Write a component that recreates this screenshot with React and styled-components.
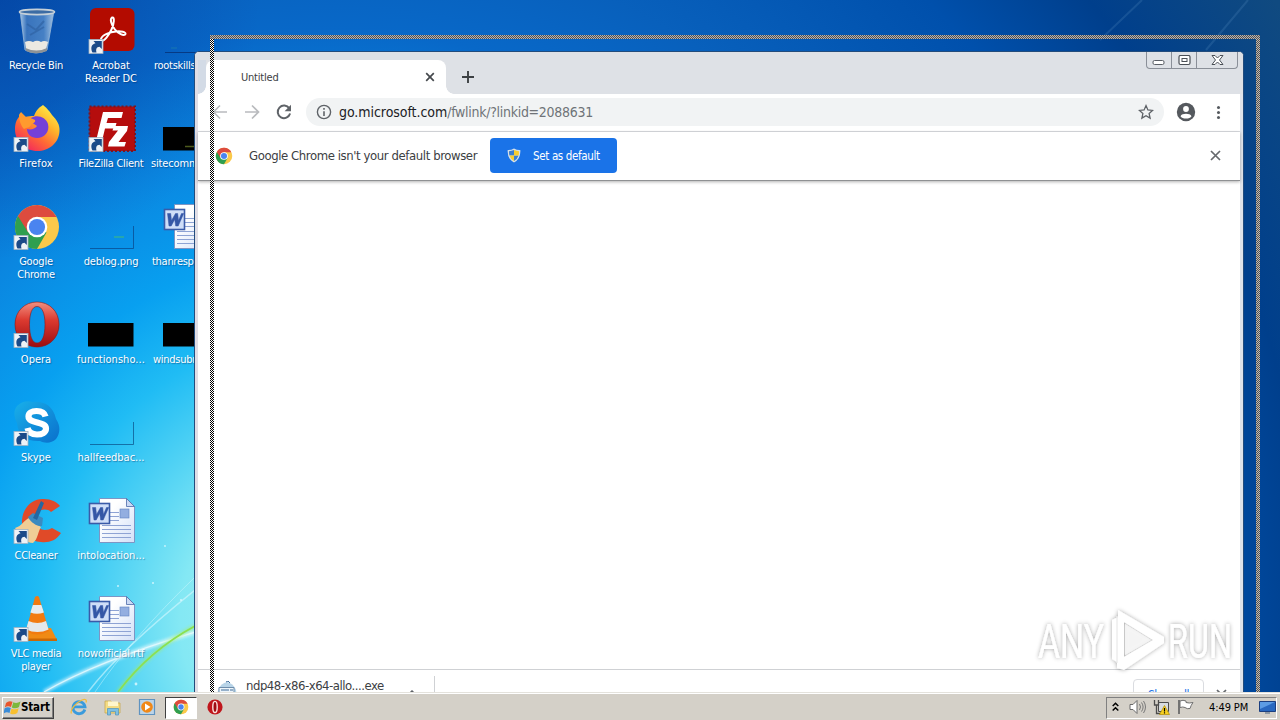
import React from "react"
import styled, {createGlobalStyle, css} from "styled-components"

const colors = {
	face: "#d4d0c8",
	frame: "#dee1e6",
	text: "#3c4043",
	grey: "#5f6368",
	blue: "#1a73e8",
}

/* ---------- icons ---------- */

const Shortcut = () => (
	<g>
		<rect x="1" y="33.500" width="14" height="14" fill="#eef2f6" stroke="#9fb2c4" strokeWidth=".8"/>
		<path d="M4.500 46.500C2.200 42 3.500 38 7.500 37.200L5.500 35h8.300v8l-2.300-2.200C8.500 41 7.500 43.500 8.500 46.500z" fill="#1b4a88"/>
	</g>
)

const RecycleIcon = () => (
	<svg width="48" height="48" viewBox="0 0 48 48">
		<defs>
			<linearGradient id="bin" x1="0" x2="1">
				<stop offset="0" stopColor="#b8d4ee"/>
				<stop offset=".2" stopColor="#3f78be"/>
				<stop offset=".7" stopColor="#4d86c8"/>
				<stop offset="1" stopColor="#b4cfe8"/>
			</linearGradient>
		</defs>
		<path d="M7 5l5 39q11 6 22 0l7-39z" fill="url(#bin)" stroke="#a9c4dc" strokeWidth=".8" opacity=".9"/>
		<path d="M12 36l1 7q10 5 20 0l2-7q-4-2-7 0-4-2.500-8 0-4-2-8 0z" fill="#ece9e2"/>
		<path d="M12.500 42q11 5 21.500 0v3q-11 4.500-21 0z" fill="#8d9296"/>
		<path d="M14 18l9 6 8-9M17 29l14-8" stroke="#2d5f9e" strokeWidth="2" fill="none" opacity=".6"/>
		<ellipse cx="24" cy="6" rx="17.500" ry="2.600" fill="#3c6ca4" stroke="#c6d0d8" strokeWidth="1.600"/>
	</svg>
)

const AcrobatIcon = () => (
	<svg width="48" height="48" viewBox="0 0 48 48">
		<rect x="2" y="2" width="44.500" height="43" rx="6" fill="#b30b00"/>
		<path d="M13 33c1-4 9-7 15-7.500 5-.6 10 .5 9.500 2.500-1 3-8-1-11-5-3-4-5-10-2.500-11.500 3-1 2 7-.5 12C21 29 16 36 13.500 34.500q-.7-.6-.5-1.500z" fill="none" stroke="#fff" strokeWidth="2"/>
		<Shortcut/>
	</svg>
)

const FirefoxIcon = () => (
	<svg width="48" height="48" viewBox="0 0 48 48">
		<defs>
			<linearGradient id="ffx" x1=".85" y1=".05" x2=".2" y2=".95">
				<stop offset="0" stopColor="#fff04a"/>
				<stop offset=".35" stopColor="#ffb32a"/>
				<stop offset=".65" stopColor="#ff6a35"/>
				<stop offset="1" stopColor="#f2255f"/>
			</linearGradient>
		</defs>
		<path d="M30 1c5 4 7 7 9 10 5 5 8 10 7.500 16C46 39 36 47 24.500 47 12 47 2 38 2 25c0-6 2-10 4-12l1-4 5 4c3-1 6-1 9-1 2-5 4-8 9-11z" fill="url(#ffx)"/>
		<path d="M18 14c6-4 15-1 17 6 2 8-4 14-11 14-6 0-10-4-10-9 4 1 8 0 10-3l-6-4z" fill="#7440d8"/>
		<path d="M6 11l2-3 5 5c4 0 6 2 9 3 1 3-3 3-4 5-1 3-4 2-7 4-3-3-5-9-5-14z" fill="#ff9a2e"/>
		<Shortcut/>
	</svg>
)

const FileZillaIcon = () => (
	<svg width="48" height="48" viewBox="0 0 48 48">
		<rect x="1.500" y="2.500" width="45.500" height="44.500" fill="#b50d0d" stroke="#7d1420" strokeWidth="2" strokeDasharray="2 2"/>
		<path d="M15 8h20l-1.500 6H20l-1.500 5h10l-1.500 5.500h-10L14 37H8z" fill="#fff"/>
		<path d="M26 22h14l-1 5-8.500 11H38l-1.500 4.500H20l1-4.500L30 26.500h-5.500z" fill="#fff"/>
		<Shortcut/>
	</svg>
)

const ChromeMark = ({size}) => (
	<svg width={size} height={size} viewBox="0 0 48 48">
		<circle cx="24" cy="24" r="22" fill="#fbc94a"/>
		<path d="M24 24L4.950 13A22 22 0 0 0 24 46l9.500-16.500z" fill="#2f9f50"/>
		<path d="M24 14h19.600A22 22 0 0 0 4.950 13l9.900 16z" fill="#dd4b3e"/>
		<circle cx="24" cy="24" r="10.300" fill="#fff"/>
		<circle cx="24" cy="24" r="8.100" fill="#4a84f0"/>
	</svg>
)

const ChromeIcon = () => (
	<svg width="48" height="48" viewBox="0 0 48 48">
		<g transform="translate(0 1)"><ChromeMark size={48}/></g>
		<Shortcut/>
	</svg>
)

const OperaMark = ({size, badge}) => (
	<svg width={size} height={size} viewBox="0 0 48 48">
		<defs>
			<linearGradient id="opr" x1="0" x2="0" y1="0" y2="1">
				<stop offset="0" stopColor="#f29080"/>
				<stop offset=".4" stopColor="#dc3a30"/>
				<stop offset="1" stopColor="#9c0c10"/>
			</linearGradient>
		</defs>
		<path fillRule="evenodd" d="M24 2C36 2 46 11 46 24.500S36 47 24 47 2 38 2 24.500 12 2 24 2zm0 4.500c-5 0-7.500 7-7.500 18S19 43 24 43s8-7 8-18.500-3-18-8-18z" fill="url(#opr)" stroke="#8e1414" strokeWidth=".6"/>
		{badge && <Shortcut/>}
	</svg>
)

const SkypeIcon = () => (
	<svg width="48" height="48" viewBox="0 0 48 48">
		<defs>
			<linearGradient id="sky" x1="0" x2="1" y1="0" y2="1">
				<stop offset="0" stopColor="#18b0ea"/>
				<stop offset="1" stopColor="#0a70cc"/>
			</linearGradient>
		</defs>
		<path d="M4 8C10 2 16 3 20 4c10-1 20 3 23 17 5 7 4 15 0 20-5 5-12 4-16 2C15 44 5 38 4 25 1 19 0 13 4 8z" fill="url(#sky)"/>
		<path d="M32.500 18.500c-1-4-4.500-5.500-9-5.500-5 0-8 2-8 5.500 0 7.500 17.500 4.500 17.500 12 0 4-4 6-9 6s-8.500-2-9.500-6.500" fill="none" stroke="#fff" strokeWidth="6.200"/>
		<Shortcut/>
	</svg>
)

const CCleanerIcon = () => (
	<svg width="48" height="48" viewBox="0 0 48 48">
		<path d="M47 10l-9 6c-4-4-12-3-15 3-3 8 3 15 9 15 3 0 5-1 7-2l9 5c-5 8-13 10-20 9C16 45 8 37 9 24 10 11 20 2 31 3c7 0 13 3 16 7z" fill="#e04a28"/>
		<path d="M2 32c7-2 9-8 14-10l12 9c-3 4-3 12-8 16-7 0-12-5-18-15z" fill="#f0cd95"/>
		<path d="M15 21l5-4 10 5-1 8c-4 1-11-3-14-9z" fill="#3b8ac0"/>
		<path d="M28 5l3 2-7 17-4-2z" fill="#2467a0"/>
		<Shortcut/>
	</svg>
)

const VlcIcon = () => (
	<svg width="48" height="48" viewBox="0 0 48 48">
		<path d="M12 34h26l6 12H8z" fill="#f08a14"/>
		<path d="M8 44.500h36V47H8z" fill="#c96806"/>
		<path d="M22 3q2.500-2 4 0l10 34q-12 7-23 0z" fill="#f27b10"/>
		<path d="M19.800 11h8.600l2.500 7.500q-7 2.500-13.500 0z" fill="#e8ecee"/>
		<path d="M15.500 27q9 4 17.500 0l2.600 8.500q-11 5-22.600 0z" fill="#e4e8ea"/>
		<Shortcut/>
	</svg>
)

const WordIcon = () => (
	<svg width="48" height="48" viewBox="0 0 48 48">
		<defs>
			<linearGradient id="doc" x1="0" x2="1" y1="0" y2="1">
				<stop offset=".3" stopColor="#fff"/>
				<stop offset="1" stopColor="#d3e0f8"/>
			</linearGradient>
		</defs>
		<path d="M11.500 2.500h27l8 8v36h-35z" fill="url(#doc)" stroke="#7d95c4"/>
		<path d="M38.500 2.500v8h8z" fill="#cad9f4" stroke="#4c6aa8" strokeWidth=".8"/>
		<path d="M22 16.500h9M22 20.500h9M22 24.500h9M14 29.500h29M14 33.500h29M14 37.500h29M14 41.500h29" stroke="#8ea3d4" fill="none"/>
		<rect x="32" y="13" width="9" height="9" fill="#93aee0" stroke="#5f80c0" strokeWidth=".6"/>
		<rect x="1.500" y="7.500" width="20" height="20" fill="#cfdef8" stroke="#3a5ba8" strokeWidth="1.600"/>
		<path d="M4.500 11.500h3.200l.8 7 4-7h2.200l.8 7 3-7h2.200l-5.500 12.500h-2.500l-1-6.500-3.500 6.500H6z" fill="#3457a6" stroke="#3457a6" strokeWidth=".5"/>
	</svg>
)

const ThumbIcon = ({kind}) => (
	<svg width="48" height="48" viewBox="0 0 48 48">
		{(kind === "black" || kind === "glow") && <rect x="0" y="23" width="45.500" height="23.500" fill="#000"/>}
		{kind === "glow" && <path d="M22 42.500h9" stroke="#4d5a1c" strokeWidth="1.500"/>}
		{kind === "clear" && <path d="M2 46.500h43.500V24" fill="none" stroke="#0a4f86" opacity=".7"/>}
		{kind === "dash" && <path d="M2 46.500h43.500V24" fill="none" stroke="#0a4488" opacity=".7"/>}
		{kind === "dash" && <path d="M26 35h10" stroke="#2fae9c" strokeWidth="1.500"/>}
		{kind === "line" && <path d="M2 46.500h44" stroke="#063a84"/>}
		{kind === "line" && <path d="M8 42h6" stroke="#1878b0"/>}
	</svg>
)

const Swooshes = () => (
	<svg width="195" height="692" viewBox="0 0 195 692" fill="none">
		<defs>
			<filter id="soft"><feGaussianBlur stdDeviation="1.600"/></filter>
		</defs>
		<path d="M44 692Q95 662 195 632" stroke="#fff" strokeWidth="4" opacity=".6" filter="url(#soft)"/>
		<path d="M44 692Q95 662 195 632" stroke="#e8fbff" strokeWidth="1.200" opacity=".8"/>
		<path d="M88 692Q120 650 195 590" stroke="#d8f8ff" strokeWidth="1.500" opacity=".6"/>
		<path d="M95 692Q130 640 195 577" stroke="#d8f8ff" strokeWidth="1" opacity=".45"/>
		<path d="M118 692Q150 650 195 626" stroke="#a4ee60" strokeWidth="4" opacity=".5" filter="url(#soft)"/>
		<path d="M118 692Q150 650 195 626" stroke="#8ce050" strokeWidth="1.600"/>
		<g fill="#e4fbff" opacity=".8">
			<circle cx="118" cy="586" r="1"/>
			<circle cx="153" cy="583" r="1"/>
			<circle cx="136" cy="684" r="1.400"/>
			<circle cx="165" cy="546" r=".9"/>
			<circle cx="181" cy="600" r="1"/>
		</g>
	</svg>
)

const Watermark = () => (
	<svg width="210" height="76" viewBox="0 0 210 76">
		<defs>
			<filter id="wm" x="-10%" y="-10%" width="120%" height="120%">
				<feDropShadow dx="0" dy="0" stdDeviation="2" floodColor="#000" floodOpacity=".36"/>
			</filter>
		</defs>
		<g filter="url(#wm)" fill="#fff" fontFamily="Roboto, 'Liberation Sans', sans-serif" fontSize="48" fontWeight="400">
			<text x="4" y="56" textLength="66" lengthAdjust="spacingAndGlyphs">ANY</text>
			<text x="134" y="56" textLength="64" lengthAdjust="spacingAndGlyphs">RUN</text>
			<path fillRule="evenodd" d="M84 8l46 27v6L90 68l-7-2v-6l-5-3V18l6-3zm6 12v35l29-17z"/>
			<path d="M83 14v47" stroke="#e4e4e4" strokeWidth="1"/>
			<path d="M91 22v31l26-15z" opacity=".45"/>
		</g>
	</svg>
)

/* ---------- data ---------- */

const desktopIcons = [
	{icon: <RecycleIcon/>, name: "Recycle Bin"},
	{icon: <FirefoxIcon/>, name: "Firefox", spacing: 0.1},
	{icon: <ChromeIcon/>, name: "Google Chrome", spacing: -0.2},
	{icon: <OperaMark size={48} badge/>, name: "Opera", spacing: 0},
	{icon: <SkypeIcon/>, name: "Skype", spacing: 0},
	{icon: <CCleanerIcon/>, name: "CCleaner"},
	{icon: <VlcIcon/>, name: "VLC media player", spacing: -0.3},
	{icon: <AcrobatIcon/>, name: "Acrobat Reader DC", spacing: -0.1},
	{icon: <FileZillaIcon/>, name: "FileZilla Client"},
	{icon: <ThumbIcon kind="dash"/>, name: "deblog.png", spacing: -0.1},
	{icon: <ThumbIcon kind="black"/>, name: "functionsho...", spacing: 0.05},
	{icon: <ThumbIcon kind="clear"/>, name: "hallfeedbac...", spacing: 0},
	{icon: <WordIcon/>, name: "intolocation...", spacing: 0},
	{icon: <WordIcon/>, name: "nowofficial.rtf", spacing: -0.1},
	{icon: <ThumbIcon kind="line"/>, name: "rootskills", cut: 5},
	{icon: <ThumbIcon kind="glow"/>, name: "sitecomm", spacing: -0.15, cut: 2},
	{icon: <WordIcon/>, name: "thanresp", cut: 3},
	{icon: <ThumbIcon kind="black"/>, name: "windsubr", cut: 4},
]

const DesktopIcon = ({item}) => (
	<IconCell>
		{item.icon}
		<Label $spacing={item.spacing} $cut={item.cut}>{item.name}</Label>
	</IconCell>
)

const BrowserWindow = () => (
	<Window>
		<TabStrip>
			<OldTab/>
			<Tab>
				<TabTitle>Untitled</TabTitle>
				<svg width="10" height="10" viewBox="0 0 10 10"><path d="M1.200 1.200l7.600 7.600M8.800 1.200L1.200 8.800" stroke="#45494d" strokeWidth="1.700"/></svg>
			</Tab>
			<NewTab>
				<svg width="12" height="12" viewBox="0 0 12 12"><path d="M6 0v12M0 6h12" stroke="#3c4043" strokeWidth="1.900"/></svg>
			</NewTab>
			<Captions>
				<Caption $w={24}><svg width="14" height="6"><rect x="1" y=".5" width="11" height="4" rx="1.500" fill="#fff" stroke="#5a5f66"/></svg></Caption>
				<Caption $w={25} $up><svg width="13" height="11"><rect x="1" y=".5" width="11" height="9" rx="1.500" fill="#fff" stroke="#4a4f56" strokeWidth="1.200"/><rect x="4" y="3.500" width="5" height="3" fill="#fff" stroke="#4a4f56"/></svg></Caption>
				<Caption $w={41} $up><svg width="13" height="11"><path d="M1 .5h3l2.500 2.500L9 .5h3L8.500 5l3.500 4.500H9L6.500 7 4 9.500H1L4.500 5z" fill="#fff" stroke="#4a4f56"/></svg></Caption>
			</Captions>
		</TabStrip>
		<Toolbar>
			<Nav>
				<svg width="16" height="16" viewBox="0 0 16 16"><path d="M15 8H2M8 1.500L1.500 8 8 14.500" fill="none" stroke="#b9bbbe" strokeWidth="1.700"/></svg>
				<svg width="16" height="16" viewBox="0 0 16 16"><path d="M1 8h13M8 1.500L14.500 8 8 14.500" fill="none" stroke="#b9bbbe" strokeWidth="1.700"/></svg>
				<svg width="16" height="16" viewBox="0 0 16 16"><path d="M13.300 4.400A6.300 6.300 0 1 0 14.100 9.600" fill="none" stroke="#5f6368" strokeWidth="2"/><path d="M15 .8v6.400H8.600z" fill="#5f6368"/></svg>
			</Nav>
			<Omnibox>
				<svg width="16" height="16" viewBox="0 0 16 16"><circle cx="8" cy="8" r="6.600" fill="none" stroke="#5f6368" strokeWidth="1.400"/><path d="M8 7.200V12M8 4v1.800" stroke="#5f6368" strokeWidth="1.600"/></svg>
				<Url><Host>go.microsoft.com</Host>/fwlink/?linkid=2088631</Url>
				<svg width="16" height="16" viewBox="0 0 16 16"><path d="M8 1.600l1.900 4.300 4.700.5-3.500 3.100 1 4.600L8 11.700l-4.100 2.400 1-4.600-3.500-3.100 4.700-.5z" fill="none" stroke="#5f6368" strokeWidth="1.300"/></svg>
			</Omnibox>
			<svg width="20" height="20" viewBox="0 0 20 20"><circle cx="10" cy="10" r="9.200" fill="#55595e"/><circle cx="10" cy="7" r="2.900" fill="#fff"/><path d="M4.500 14.200C6 11 14 11 15.500 14.200 14 17.400 6 17.400 4.500 14.200z" fill="#fff"/></svg>
			<Dots><i/><i/><i/></Dots>
		</Toolbar>
		<InfoBar>
			<ChromeMark size={18}/>
			<InfoText>Google Chrome isn't your default browser</InfoText>
			<DefaultButton>
				<svg width="14" height="15" viewBox="0 0 14 15">
					<path d="M7 .5q3 1.700 6.300 1.500Q14 11 7 14.500 0 11 .7 2 4 2.200 7 .5z" fill="#d4dfe8"/>
					<path d="M7 2q-2.500 1-5 1.200-.1 2.400.5 4.300H7zM7 7.500h4.500Q10.500 11 7 13z" fill="#3b7fd0"/>
					<path d="M7 2q2.500 1 5 1.200.1 2.400-.5 4.300H7zM7 7.500H2.500Q3.500 11 7 13z" fill="#f8ce2e"/>
				</svg>
				Set as default
			</DefaultButton>
			<svg width="11" height="11" viewBox="0 0 11 11"><path d="M1 1l9 9M10 1l-9 9" stroke="#66696d" strokeWidth="1.700"/></svg>
		</InfoBar>
		<Page/>
		<Shelf>
			<Download>
				<svg width="22" height="22" viewBox="0 0 22 22"><path d="M2 9Q5 2 11 1q6 1 9 8l2 13H0z" fill="#b8d4e8"/><path d="M3 6.500h15v9H3z" fill="#eef5fa" stroke="#6f8dab"/><path d="M5 9h8M14 9h3M10 1l2-1 2 2" stroke="#3d6b9a" fill="none"/></svg>
				<FileName>ndp48-x86-x64-allo....exe</FileName>
				<svg width="8" height="5"><path d="M0 5l4-4 4 4" stroke="#5f6368" fill="none" strokeWidth="1.500"/></svg>
			</Download>
			<ShowAll>Show all</ShowAll>
			<svg width="11" height="11" viewBox="0 0 11 11"><path d="M1 1l9 9M10 1l-9 9" stroke="#66696d" strokeWidth="1.700"/></svg>
		</Shelf>
	</Window>
)

const Taskbar = () => (
	<Bar>
		<Start>
			<svg width="17" height="17" viewBox="0 0 17 17">
				<path d="M2 4q3-3 6.500-1.200L7 8Q3.800 6.400.8 8.400z" fill="#e8552c"/>
				<path d="M9.300 3.200Q12.500 5 16.500 2.500L15 8q-3.500 2.400-7.200.4z" fill="#7cb83c"/>
				<path d="M.6 9.300Q3.500 7.500 6.800 9L5.500 14Q2.500 12.500-.6 14.500z" fill="#3a8cd8"/>
				<path d="M7.500 9.400q3.500 1.800 7.200-.2L13.300 14q-3.500 2.500-7.200.4z" fill="#f8c030"/>
			</svg>
			Start
		</Start>
		<Launch>
			<Slot>
				<svg width="18" height="18" viewBox="0 0 18 18">
					<path d="M14.800 11.500A6 6 0 1 1 15 8.800H4.500" fill="none" stroke="#3a9bdc" strokeWidth="2.800"/>
					<path d="M1.500 15.500C-.5 12 6 4.500 12 2c3.500-1.400 5 0 4 2.500" fill="none" stroke="#f0bc3c" strokeWidth="1.300"/>
				</svg>
			</Slot>
			<Slot>
				<svg width="18" height="18" viewBox="0 0 18 18">
					<path d="M1 3h6l1 2h8v10H1z" fill="#f4dc84" stroke="#c8a850" strokeWidth=".8"/>
					<path d="M4 3.500h10V8H4z" fill="#fff6cc"/>
					<path d="M3.500 17v-6.500h11V17h-3v-3.500h-5V17z" fill="#7ec0e4" stroke="#4d94bc" strokeWidth=".7"/>
				</svg>
			</Slot>
			<Slot>
				<svg width="18" height="18" viewBox="0 0 18 18">
					<path d="M1.500 1.500h15v15h-15z" fill="#bcd4e8" stroke="#5f93c0" strokeWidth="1.200"/>
					<circle cx="9" cy="9" r="5.800" fill="#f08818"/>
					<path d="M7 5.500l5.500 3.500L7 12.500z" fill="#fff"/>
				</svg>
			</Slot>
			<Slot $pressed><ChromeMark size={16}/></Slot>
			<Slot>
				<svg width="16" height="16" viewBox="0 0 16 16"><circle cx="8" cy="8" r="7.600" fill="#c0161c"/><ellipse cx="8" cy="8" rx="2.200" ry="5.600" fill="#a00c12" stroke="#fbe4e0" strokeWidth="1.400"/></svg>
			</Slot>
		</Launch>
		<Tray>
			<svg width="7" height="10" viewBox="0 0 7 10"><path d="M.7 4L3.500 1.200 6.300 4M.7 8.500l2.800-2.800 2.800 2.800" fill="none" stroke="#000" strokeWidth="1.500"/></svg>
			<svg width="17" height="16" viewBox="0 0 17 16"><path d="M1 5.500h3l4-4v13l-4-4H1z" fill="#fff" stroke="#6a6a6a"/><path d="M10.500 5q2 3 0 6M12.500 3.500q3.200 4.500 0 9M14.500 2q4 6 0 12" fill="none" stroke="#787878"/></svg>
			<svg width="17" height="16" viewBox="0 0 17 16"><path d="M5.500 3.500h10v9h-10z" fill="#d8dce0" stroke="#4c4c4c"/><path d="M1.500 1v5h4V1M3.500 6v8.500h4" fill="none" stroke="#4c4c4c" strokeWidth="1.300"/><path d="M11.500 6.500l5 9h-10z" fill="#f8d020" stroke="#b08c00" strokeWidth=".7"/><path d="M11.500 9v3.500M11.500 13.300v1.200" stroke="#000" strokeWidth="1.200"/></svg>
			<svg width="17" height="16" viewBox="0 0 17 16"><path d="M2 1v14" stroke="#6a6a6a" strokeWidth="1.800"/><path d="M3 2q3-1.500 6 0v1.500q3 1 7 0Q14 6 13 9.500q-3 .8-5-1-2-1-5 0z" fill="#fff" stroke="#707070"/></svg>
			<Clock>4:49 PM</Clock>
			<svg width="17" height="14" viewBox="0 0 17 14"><path d="M.5 1.500h16v10H.5z" fill="#2868c0" stroke="#1b3f80"/><path d="M1 2h15L1 9z" fill="#5c9ce4"/><path d="M6 13h5" stroke="#7a8898" strokeWidth="1.500"/></svg>
		</Tray>
	</Bar>
)

export default function App() {
	return (
		<Screen>
			<Global/>
			<Desktop>
				<Backdrop><Swooshes/></Backdrop>
				<Rays>
					<svg width="260" height="52" viewBox="0 0 260 52"><path d="M122 0l-42 40M228 0l-42 50" stroke="#5d93c4" strokeWidth="2" opacity=".22"/></svg>
				</Rays>
				<IconGrid>
					{desktopIcons.map(item => <DesktopIcon key={item.name} item={item}/>)}
				</IconGrid>
				<BrowserWindow/>
				<DragOutline><Edge $tone="mono"/><Edge/></DragOutline>
				<Mark><Watermark/></Mark>
			</Desktop>
			<Taskbar/>
		</Screen>
	)
}

/* ---------- styles ---------- */

const Global = createGlobalStyle`
	* {
		box-sizing: border-box;
	}
	body {
		margin: 0;
		overflow: hidden;
		font-family: "DejaVu Sans Condensed", "DejaVu Sans", sans-serif;
	}
	svg {
		display: block;
		flex: none;
	}
`
const Screen = styled.div`
	display: grid;
	grid-template-rows: 692px 28px;
	width: 1280px;
	height: 720px;
	overflow: hidden;
`
const Desktop = styled.main`
	position: relative;
	overflow: hidden;
	background:
		radial-gradient(circle at 0 0, rgba(0, 40, 140, .4), transparent 260px),
		radial-gradient(circle at 330px 620px, #a8f2f0 0, #84e8f4 150px, #50d2f4 220px, #20bcf4 290px, #08a0f0 370px, #0a86e0 480px, #0868c8 590px, #0860bc 680px, #0050ac 860px, #003f8c 980px, #104a80 1130px);
`
const Backdrop = styled.div`
	position: absolute;
	inset: 0 auto auto 0;
`
const Rays = styled.div`
	position: absolute;
	top: 0;
	right: 0;
`
const IconGrid = styled.div`
	position: relative;
	display: grid;
	grid-auto-flow: column;
	grid-template-rows: repeat(7, 98px);
	grid-auto-columns: 75px;
	margin-left: -1px;
	padding-top: 6px;
`
const IconCell = styled.div`
	display: flex;
	flex-direction: column;
	gap: 5px;
	& > svg {
		margin-left: 14px;
	}
`
const Label = styled.span`
	padding: 0 4px 0 3px;
	color: #fff;
	font-size: 11px;
	line-height: 13px;
	letter-spacing: ${p => p.$spacing ?? -0.28}px;
	text-align: center;
	text-shadow: 1px 1px 1px rgba(0, 30, 80, .4);
	${p => p.$cut && css`
		padding: 0 0 0 ${p.$cut}px;
		text-align: left;
	`}
`
const Window = styled.section`
	position: absolute;
	left: 194px;
	top: 51px;
	display: flex;
	flex-direction: column;
	width: 1050px;
	height: 672px;
	border: 1px solid #234c7c;
	border-radius: 5px 5px 0 0;
	background: #fff;
	box-shadow: inset 3px 0 #e0dee6, inset -3px 0 #dfe3ea;
	overflow: hidden;
`
const TabStrip = styled.div`
	display: flex;
	align-items: flex-end;
	height: 42px;
	background: ${colors.frame};
`
const OldTab = styled.div`
	width: 11px;
	height: 34px;
	background: linear-gradient(90deg, #e0dee6 3px, #d3dbe6 3px);
`
const Tab = styled.div`
	position: relative;
	display: flex;
	align-items: center;
	justify-content: space-between;
	width: 240px;
	height: 34px;
	padding: 0 11px 0 35px;
	border-radius: 8px 8px 0 0;
	background: #fff;
	&::before,
	&::after {
		content: "";
		position: absolute;
		right: -8px;
		bottom: 0;
		width: 8px;
		height: 8px;
		background: radial-gradient(circle at 100% 0, transparent 7.500px, #fff 8px);
	}
	&::before {
		right: auto;
		left: -8px;
		background: radial-gradient(circle at 0 0, transparent 7.500px, #fff 8px);
	}
`
const TabTitle = styled.span`
	padding-top: 1px;
	color: ${colors.text};
	font-size: 11px;
	letter-spacing: -0.2px;
`
const NewTab = styled.div`
	padding: 0 0 11px 16px;
`
const Captions = styled.div`
	display: flex;
	align-self: flex-start;
	height: 17px;
	margin: 0 5px 0 auto;
	border: 1px solid #8a8f98;
	border-top: 0;
	border-radius: 0 0 4px 4px;
`
const Caption = styled.div`
	display: flex;
	justify-content: center;
	align-items: flex-start;
	width: ${p => p.$w}px;
	padding-top: ${p => p.$up ? 3 : 8}px;
	& + & {
		border-left: 1px solid #8a8f98;
	}
`
const Toolbar = styled.div`
	display: flex;
	align-items: center;
	height: 38px;
	margin: 0 3px;
	padding: 0 12px 1px 14px;
	border-bottom: 1px solid #dadce0;
	& > svg {
		margin-left: 12px;
	}
`
const Nav = styled.div`
	display: flex;
	gap: 16px;
`
const Omnibox = styled.div`
	display: flex;
	align-items: center;
	flex: 1;
	height: 28px;
	margin-left: 14px;
	padding: 0 10px;
	border-radius: 14px;
	background: #f1f3f4;
`
const Url = styled.span`
	flex: 1;
	padding-left: 7px;
	color: #6f7378;
	font-size: 14px;
	letter-spacing: -0.29px;
	white-space: nowrap;
`
const Host = styled.span`
	color: #202124;
	letter-spacing: -0.05px;
`
const Dots = styled.div`
	display: flex;
	flex-direction: column;
	gap: 2px;
	margin: 0 8px 0 21px;
	i {
		width: 3px;
		height: 3px;
		border-radius: 50%;
		background: #55595e;
	}
`
const InfoBar = styled.div`
	display: flex;
	align-items: center;
	height: 49px;
	margin: 0 3px;
	padding: 0 19px 1px 17px;
	border-bottom: 1px solid #8f9193;
	box-shadow: 0 1px 3px rgba(0, 0, 0, .3);
	& > svg:last-child {
		margin-left: auto;
	}
`
const InfoText = styled.span`
	width: 257px;
	padding-left: 16px;
	color: ${colors.text};
	font-size: 13px;
	letter-spacing: -0.41px;
	white-space: nowrap;
`
const DefaultButton = styled.div`
	display: flex;
	align-items: center;
	gap: 12px;
	width: 127px;
	height: 35px;
	padding-left: 17px;
	border-radius: 4px;
	background: ${colors.blue};
	color: #fff;
	font-size: 11.5px;
	letter-spacing: -0.35px;
	white-space: nowrap;
`
const Page = styled.div`
	flex: none;
	height: 488px;
`
const Shelf = styled.div`
	display: flex;
	flex: none;
	align-items: center;
	height: 50px;
	margin: 0 3px;
	padding-right: 13px;
	border-top: 1px solid #cfd1d4;
	& > svg {
		margin-left: 12px;
	}
`
const Download = styled.div`
	display: flex;
	align-items: flex-start;
	align-self: flex-start;
	width: 237px;
	height: 36px;
	margin: 6px auto 0 0;
	padding-left: 18px;
	border-right: 1px solid #cfd1d4;
	& > svg {
		margin-top: 5px;
	}
	& > svg:last-child {
		margin: 14px 0 0 23px;
	}
`
const FileName = styled.span`
	width: 139px;
	margin-left: 8px;
	color: ${colors.text};
	font-size: 13px;
	line-height: 20px;
	letter-spacing: -0.47px;
	white-space: nowrap;
`
const ShowAll = styled.div`
	width: 71px;
	height: 32px;
	border: 1px solid #dadce0;
	border-radius: 4px;
	color: ${colors.blue};
	font-size: 12px;
	line-height: 30px;
	letter-spacing: -0.5px;
	text-align: center;
`
const checker = (dark, light) => `repeating-conic-gradient(${dark} 0 25%, ${light} 0 50%) 0 0 / 2px 2px`
const DragOutline = styled.div`
	position: absolute;
	left: 210px;
	top: 35px;
	display: flex;
	justify-content: space-between;
	width: 1050px;
	height: 657px;
	padding-top: 4px;
	&::before {
		content: "";
		position: absolute;
		inset: 0 0 auto 0;
		height: 4px;
		background: ${checker("#4c5058", "#bcb4ac")};
	}
`
const Edge = styled.div`
	width: 4px;
	background: ${p => p.$tone === "mono" ? checker("#000", "#fff") : checker("#4c5058", "#c8bcac")};
`
const Mark = styled.div`
	position: absolute;
	right: 36px;
	bottom: 14px;
`
const Bar = styled.footer`
	display: flex;
	align-items: center;
	padding: 3px 3px 1px 2px;
	border-top: 1px solid #e4e2dc;
	background: ${colors.face};
	box-shadow: inset 0 1px #fff;
`
const Start = styled.div`
	display: flex;
	align-items: center;
	width: 52px;
	height: 22px;
	padding: 0 0 1px 1px;
	border: 1px solid;
	border-color: #fff #404040 #404040 #fff;
	box-shadow: inset -1px -1px #808080;
	color: #000;
	font-size: 11.5px;
	font-weight: bold;
	letter-spacing: -0.15px;
`
const Launch = styled.div`
	display: flex;
	gap: 2px;
	margin-left: 9px;
`
const Slot = styled.div`
	display: flex;
	align-items: center;
	justify-content: center;
	width: 32px;
	height: 22px;
	padding-bottom: 1px;
	${p => p.$pressed && css`
		border: 1px solid;
		border-color: #404040 #fff #fff #404040;
		background: #fff;
	`}
`
const Tray = styled.div`
	display: flex;
	align-items: center;
	width: 171px;
	height: 22px;
	margin-left: auto;
	padding: 0 0 1px 5px;
	border: 1px solid;
	border-color: #808080 #fff #fff #808080;
	& > svg + svg {
		margin-left: 7px;
	}
	& > svg:nth-child(2) {
		margin-left: 10px;
	}
`
const Clock = styled.span`
	width: 40px;
	margin: 0 11px 0 15px;
	color: #000;
	font-size: 11px;
	letter-spacing: -0.1px;
	white-space: nowrap;
`
